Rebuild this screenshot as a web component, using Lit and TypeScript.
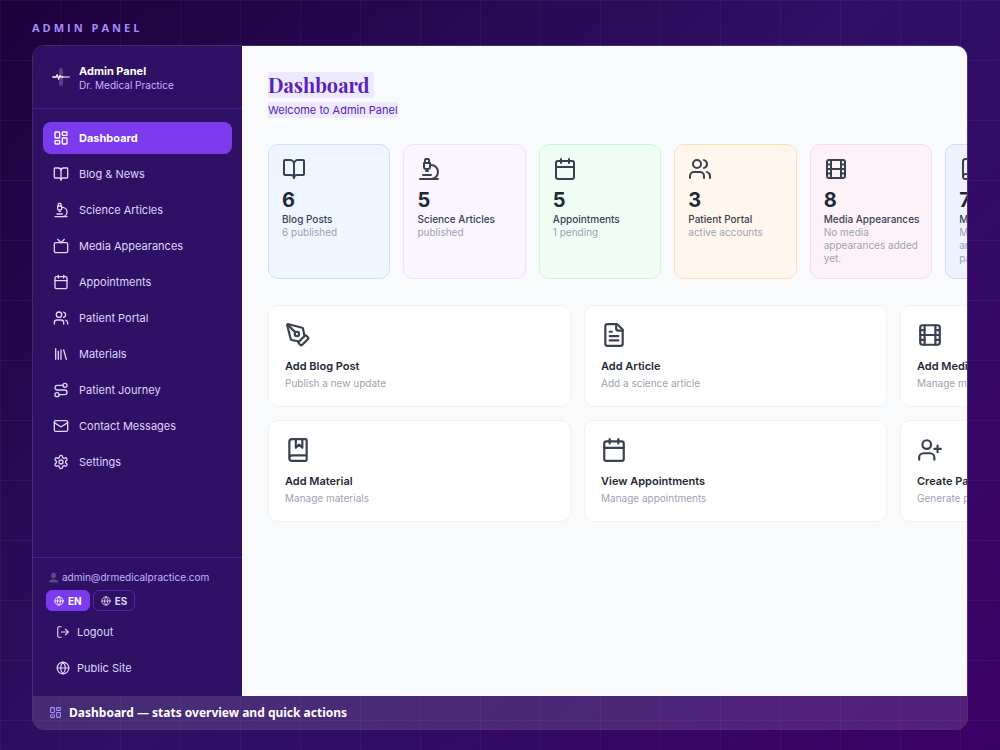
import { LitElement, html, css, svg, type SVGTemplateResult } from "lit";
import { customElement, property, state } from "lit/decorators.js";
import { classMap } from "lit/directives/class-map.js";

const ICONS: Record<string, SVGTemplateResult> = {
  dashboard: svg`<rect width="7" height="9" x="3" y="3" rx="1"/><rect width="7" height="5" x="14" y="3" rx="1"/><rect width="7" height="9" x="14" y="12" rx="1"/><rect width="7" height="5" x="3" y="16" rx="1"/>`,
  bookOpen: svg`<path d="M12 7v14"/><path d="M3 18a1 1 0 0 1-1-1V4a1 1 0 0 1 1-1h5a4 4 0 0 1 4 4 4 4 0 0 1 4-4h5a1 1 0 0 1 1 1v13a1 1 0 0 1-1 1h-6a3 3 0 0 0-3 3 3 3 0 0 0-3-3z"/>`,
  microscope: svg`<path d="M6 18h8"/><path d="M3 22h18"/><path d="M14 22a7 7 0 1 0 0-14h-1"/><path d="M9 14h2"/><path d="M9 12a2 2 0 0 1-2-2V6h6v4a2 2 0 0 1-2 2Z"/><path d="M12 6V3a1 1 0 0 0-1-1H9a1 1 0 0 0-1 1v3"/>`,
  tv: svg`<path d="m17 2-5 5-5-5"/><rect width="20" height="15" x="2" y="7" rx="2"/>`,
  calendar: svg`<path d="M8 2v4"/><path d="M16 2v4"/><rect width="18" height="18" x="3" y="4" rx="2"/><path d="M3 10h18"/>`,
  users: svg`<path d="M16 21v-2a4 4 0 0 0-4-4H6a4 4 0 0 0-4 4v2"/><circle cx="9" cy="7" r="4"/><path d="M22 21v-2a4 4 0 0 0-3-3.87"/><path d="M16 3.13a4 4 0 0 1 0 7.75"/>`,
  library: svg`<path d="m16 6 4 14"/><path d="M12 6v14"/><path d="M8 8v12"/><path d="M4 4v16"/>`,
  route: svg`<circle cx="6" cy="19" r="3"/><path d="M9 19h8.5a3.5 3.5 0 0 0 0-7h-11a3.5 3.5 0 0 1 0-7H15"/><circle cx="18" cy="5" r="3"/>`,
  mail: svg`<rect width="20" height="16" x="2" y="4" rx="2"/><path d="m22 7-8.97 5.7a1.94 1.94 0 0 1-2.06 0L2 7"/>`,
  settings: svg`<path d="M12.22 2h-.44a2 2 0 0 0-2 2v.18a2 2 0 0 1-1 1.73l-.43.25a2 2 0 0 1-2 0l-.15-.08a2 2 0 0 0-2.73.73l-.22.38a2 2 0 0 0 .73 2.73l.15.1a2 2 0 0 1 1 1.72v.51a2 2 0 0 1-1 1.74l-.15.09a2 2 0 0 0-.73 2.73l.22.38a2 2 0 0 0 2.73.73l.15-.08a2 2 0 0 1 2 0l.43.25a2 2 0 0 1 1 1.73V20a2 2 0 0 0 2 2h.44a2 2 0 0 0 2-2v-.18a2 2 0 0 1 1-1.73l.43-.25a2 2 0 0 1 2 0l.15.08a2 2 0 0 0 2.73-.73l.22-.39a2 2 0 0 0-.73-2.73l-.15-.08a2 2 0 0 1-1-1.74v-.5a2 2 0 0 1 1-1.74l.15-.09a2 2 0 0 0 .73-2.73l-.22-.38a2 2 0 0 0-2.73-.73l-.15.08a2 2 0 0 1-2 0l-.43-.25a2 2 0 0 1-1-1.73V4a2 2 0 0 0-2-2z"/><circle cx="12" cy="12" r="3"/>`,
  logout: svg`<path d="M9 21H5a2 2 0 0 1-2-2V5a2 2 0 0 1 2-2h4"/><path d="m16 17 5-5-5-5"/><path d="M21 12H9"/>`,
  globe: svg`<circle cx="12" cy="12" r="10"/><path d="M12 2a14.5 14.5 0 0 0 0 20 14.5 14.5 0 0 0 0-20"/><path d="M2 12h20"/>`,
  pen: svg`<path d="M15.707 21.293a1 1 0 0 1-1.414 0l-1.586-1.586a1 1 0 0 1 0-1.414l5.586-5.586a1 1 0 0 1 1.414 0l1.586 1.586a1 1 0 0 1 0 1.414z"/><path d="m18 13-1.375-6.874a1 1 0 0 0-.746-.776L3.235 2.028a1 1 0 0 0-1.207 1.207L5.35 15.879a1 1 0 0 0 .776.746L13 18"/><path d="m2.3 2.3 7.286 7.286"/><circle cx="11" cy="11" r="2"/>`,
  file: svg`<path d="M15 2H6a2 2 0 0 0-2 2v16a2 2 0 0 0 2 2h12a2 2 0 0 0 2-2V7Z"/><path d="M14 2v4a2 2 0 0 0 2 2h4"/><path d="M10 9H8"/><path d="M16 13H8"/><path d="M16 17H8"/>`,
  film: svg`<rect width="18" height="18" x="3" y="3" rx="2"/><path d="M7 3v18"/><path d="M3 7.5h4"/><path d="M3 12h18"/><path d="M3 16.5h4"/><path d="M17 3v18"/><path d="M17 7.5h4"/><path d="M17 16.5h4"/>`,
  book: svg`<path d="M4 19.5v-15A2.5 2.5 0 0 1 6.5 2H19a1 1 0 0 1 1 1v18a1 1 0 0 1-1 1H6.5a1 1 0 0 1 0-5H20"/>`,
  bookMarked: svg`<path d="M10 2v8l3-3 3 3V2"/><path d="M4 19.5v-15A2.5 2.5 0 0 1 6.5 2H19a1 1 0 0 1 1 1v18a1 1 0 0 1-1 1H6.5a1 1 0 0 1 0-5H20"/>`,
  userPlus: svg`<path d="M16 21v-2a4 4 0 0 0-4-4H6a4 4 0 0 0-4 4v2"/><circle cx="9" cy="7" r="4"/><path d="M19 8v6"/><path d="M22 11h-6"/>`,
};

@customElement("line-icon")
export class LineIcon extends LitElement {
  static styles = css`
    :host { display: block; flex: none; width: 16px; height: 16px; }
    .glyph { display: block; width: 100%; height: 100%; fill: none; stroke: currentColor; stroke-width: 2; stroke-linecap: round; stroke-linejoin: round; }
  `;
  @property() name = "";

  render() {
    return html`<svg class="glyph" viewBox="0 0 24 24" aria-hidden="true">${ICONS[this.name]}</svg>`;
  }
}

const NAV = [
  ["dashboard", "Dashboard"],
  ["bookOpen", "Blog & News"],
  ["microscope", "Science Articles"],
  ["tv", "Media Appearances"],
  ["calendar", "Appointments"],
  ["users", "Patient Portal"],
  ["library", "Materials"],
  ["route", "Patient Journey"],
  ["mail", "Contact Messages"],
  ["settings", "Settings"],
];

const STATS = [
  { tone: "blue", icon: "bookOpen", value: 6, label: "Blog Posts", note: "6 published" },
  { tone: "purple", icon: "microscope", value: 5, label: "Science Articles", note: "published" },
  { tone: "green", icon: "calendar", value: 5, label: "Appointments", note: "1 pending" },
  { tone: "orange", icon: "users", value: 3, label: "Patient Portal", note: "active accounts" },
  { tone: "pink", icon: "film", value: 8, label: "Media Appearances", note: "No media appearances added yet." },
  { tone: "indigo", icon: "book", value: 7, label: "Materials", note: "Medical information and handouts for patients" },
];

const ACTIONS = [
  ["pen", "Add Blog Post", "Publish a new update"],
  ["file", "Add Article", "Add a science article"],
  ["film", "Add Media", "Manage media"],
  ["bookMarked", "Add Material", "Manage materials"],
  ["calendar", "View Appointments", "Manage appointments"],
  ["userPlus", "Create Patient", "Generate portal access"],
];

@customElement("app-root")
export class AppRoot extends LitElement {
  static styles = css`
    :host {
      display: flex;
      flex-direction: column;
      box-sizing: border-box;
      height: 100vh;
      padding: 20px 32px;
      font-family: Inter, "Liberation Sans", sans-serif;
      font-size: 11px;
      background:
        linear-gradient(rgba(255, 255, 255, 0.04) 1px, transparent 1px) 0 0 / 60px 60px,
        linear-gradient(90deg, rgba(255, 255, 255, 0.04) 1px, transparent 1px) 0 0 / 60px 60px,
        linear-gradient(135deg, #1e003c 0%, #2e1065 50%, #3b0066 100%);
    }
    * { box-sizing: border-box; }
    a { color: inherit; text-decoration: none; }
    button { font: inherit; color: inherit; background: none; border: 0; padding: 0; cursor: pointer; }

    .eyebrow { margin: 0 0 9px; font: 700 11px/16px "Open Sans", "Noto Sans", sans-serif; letter-spacing: 3px; color: #a78bfa; }
    .window { flex: 1; min-height: 0; display: flex; flex-direction: column; border: 1px solid rgba(255, 255, 255, 0.15); border-radius: 12px; overflow: hidden; }
    .screen { flex: 1; min-height: 0; display: flex; }
    .caption { display: flex; align-items: center; gap: 7px; height: 33px; padding: 0 16px; font: 700 12px/16px "Noto Sans", sans-serif; color: #fff; background: rgba(255, 255, 255, 0.12); }
    .caption-icon { width: 13px; height: 13px; color: #a78bfa; }

    .sidebar { flex: none; width: 209px; display: flex; flex-direction: column; background: #2e1065; color: #ddd6fe; }
    .brand { display: flex; align-items: center; gap: 8px; height: 63px; padding: 0 18px; border-bottom: 1px solid #4c1d95; }
    .logo { flex: none; width: 20px; height: 20px; }
    .brand-name { margin: 0; font-size: 11px; line-height: 16px; font-weight: 700; color: #fff; }
    .brand-sub { margin: 0; font-size: 10px; line-height: 13px; color: #c4b5fd; }
    .nav { flex: 1; display: flex; flex-direction: column; gap: 4px; padding: 13px 10px; }
    .nav-link { display: flex; align-items: center; gap: 10px; height: 32px; padding: 0 10px; border-radius: 8px; line-height: 16px; }
    .nav-link.active { background: #7c3aed; color: #fff; font-weight: 700; }
    .account { display: flex; flex-direction: column; padding: 13px 13px 12px; border-top: 1px solid #4c1d95; }
    .email { display: flex; align-items: center; gap: 3px; margin: 0; padding-left: 2px; font-size: 10px; line-height: 13px; color: #c4b5fd; }
    .avatar { width: 11px; height: 11px; fill: #5b4685; }
    .langs { display: flex; gap: 3px; margin: 6px 0 5px; }
    .lang { display: flex; align-items: center; gap: 4px; height: 21px; padding: 0 7px; border: 1px solid #5b21b6; border-radius: 6px; font-size: 10px; font-weight: 700; }
    .lang.active { background: #7c3aed; border-color: #7c3aed; color: #fff; }
    .lang-icon { width: 10px; height: 10px; }
    .account-links { display: flex; flex-direction: column; gap: 4px; }
    .account-link { display: flex; align-items: center; gap: 7px; height: 32px; padding: 0 10px; line-height: 16px; }
    .account-icon { width: 14px; height: 14px; }

    .main { flex: 1; min-width: 0; padding: 26px; background: #f9fafc; overflow: hidden; }
    .content { min-width: 935px; }
    .title { margin: 0; width: fit-content; padding-right: 4px; font: 700 20px/26px "Playfair Display", "Liberation Serif", serif; color: #5b21b6; background: #ede9fe; }
    .welcome { margin: 4px 0 26px; width: fit-content; line-height: 16px; color: #5b21b6; background: #ede9fe; }
    .stats { display: grid; grid-template-columns: repeat(7, 1fr); gap: 13px; margin-bottom: 26px; }
    .stat { min-height: 135px; padding: 12px 10px 12px 13px; border: 1px solid; border-radius: 10px; color: #374151; }
    .stat-icon { width: 24px; height: 24px; }
    .stat-value { margin: 6px 0 0; font-size: 20px; line-height: 26px; font-weight: 700; color: #1f2937; }
    .stat-label { margin: 0; font-size: 10px; line-height: 13px; font-weight: 500; }
    .stat-note { margin: 0; font-size: 10px; line-height: 13px; color: #9ca3af; }
    .blue { background: #eff6ff; border-color: #cbe2fe; }
    .purple { background: #faf5ff; border-color: #eee0ff; }
    .green { background: #f0fdf4; border-color: #c9f8d9; }
    .orange { background: #fff7ed; border-color: #fedfb8; }
    .pink { background: #fdf2f8; border-color: #fcd9ec; }
    .indigo { background: #eef2ff; border-color: #d0dafe; }
    .actions { display: grid; grid-template-columns: repeat(3, 1fr); gap: 13px; }
    .action { display: block; padding: 16px 16px 15px; border: 1px solid #eff1f4; border-radius: 10px; background: #fff; color: #374151; }
    .action-icon { width: 26px; height: 26px; }
    .action-title { margin: 9px 0 1px; font-size: 11px; line-height: 18px; font-weight: 600; color: #1f2937; }
    .action-note { margin: 0; font-size: 10px; line-height: 15px; color: #9ca3af; }
  `;

  @state() private page = "Dashboard";
  @state() private lang = "EN";

  private renderSidebar() {
    return html`
      <aside class="sidebar">
        <header class="brand">
          <svg class="logo" viewBox="0 0 20 20" aria-hidden="true">
            <rect x="8" y="1" width="4" height="18" rx="2" fill="#fff" fill-opacity=".2" />
            <rect x="1" y="8.9" width="18" height="2.2" rx="1.1" fill="#fff" fill-opacity=".5" />
            <path d="M2 10h3l1.2-2.6L7.6 12.6 9 8l1 2h2" fill="none" stroke="#fff" stroke-width="1" stroke-linejoin="round" stroke-linecap="round" />
          </svg>
          <div>
            <p class="brand-name">Admin Panel</p>
            <p class="brand-sub">Dr. Medical Practice</p>
          </div>
        </header>
        <nav class="nav" aria-label="Sections">
          ${NAV.map(([icon, label]) => html`
            <a class=${classMap({ "nav-link": true, active: this.page === label })} href="#" @click=${(e: Event) => { e.preventDefault(); this.page = label; }}>
              <line-icon name=${icon}></line-icon>${label}
            </a>`)}
        </nav>
        <footer class="account">
          <p class="email">
            <svg class="avatar" viewBox="0 0 12 12" aria-hidden="true"><ellipse cx="6" cy="3.8" rx="2.7" ry="3.3" /><path d="M1 11.5c0-2.6 2-3.6 5-3.6s5 1 5 3.6z" /></svg>
            admin@drmedicalpractice.com
          </p>
          <div class="langs">
            ${["EN", "ES"].map((code) => html`
              <button type="button" class=${classMap({ lang: true, active: this.lang === code })} @click=${() => (this.lang = code)}>
                <line-icon class="lang-icon" name="globe"></line-icon>${code}
              </button>`)}
          </div>
          <div class="account-links">
            <button type="button" class="account-link"><line-icon class="account-icon" name="logout"></line-icon>Logout</button>
            <a class="account-link" href="#"><line-icon class="account-icon" name="globe"></line-icon>Public Site</a>
          </div>
        </footer>
      </aside>`;
  }

  render() {
    return html`
      <p class="eyebrow">ADMIN PANEL</p>
      <div class="window">
        <div class="screen">
          ${this.renderSidebar()}
          <main class="main">
            <div class="content">
              <h1 class="title">Dashboard</h1>
              <p class="welcome">Welcome to Admin Panel</p>
              <section class="stats" aria-label="Statistics">
                ${STATS.map((s) => html`
                  <article class="stat ${s.tone}">
                    <line-icon class="stat-icon" name=${s.icon}></line-icon>
                    <p class="stat-value">${s.value}</p>
                    <p class="stat-label">${s.label}</p>
                    <p class="stat-note">${s.note}</p>
                  </article>`)}
              </section>
              <section class="actions" aria-label="Quick actions">
                ${ACTIONS.map(([icon, title, note]) => html`
                  <a class="action" href="#">
                    <line-icon class="action-icon" name=${icon}></line-icon>
                    <h2 class="action-title">${title}</h2>
                    <p class="action-note">${note}</p>
                  </a>`)}
              </section>
            </div>
          </main>
        </div>
        <div class="caption"><line-icon class="caption-icon" name="dashboard"></line-icon>Dashboard — stats overview and quick actions</div>
      </div>`;
  }
}
